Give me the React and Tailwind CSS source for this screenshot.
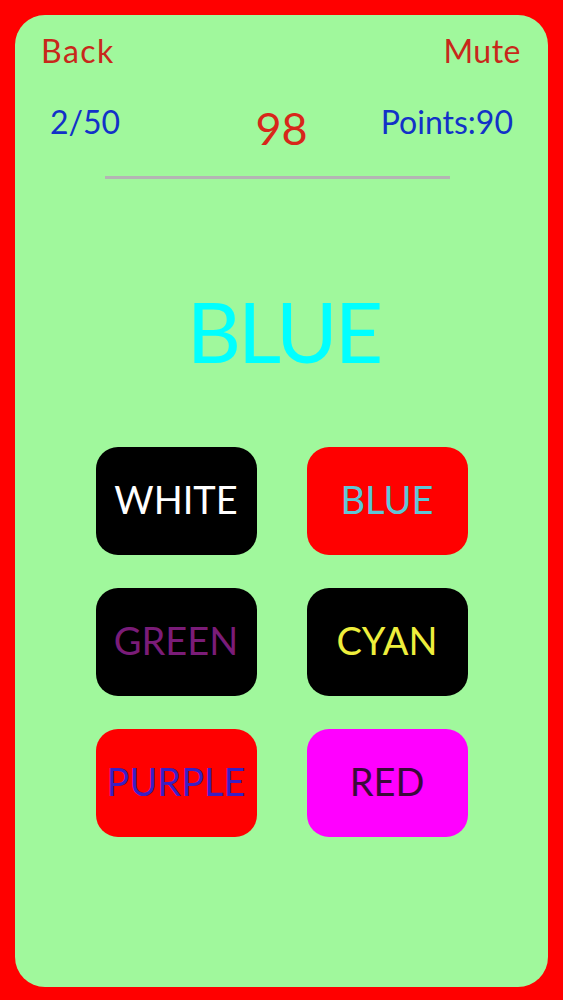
import React from "react";

const buttons = [
  { label: "WHITE", bg: "bg-black", fg: "text-white" },
  { label: "BLUE", bg: "bg-[#ff0000]", fg: "text-[#5ec6d8]" },
  { label: "GREEN", bg: "bg-black", fg: "text-[#7a1c78]" },
  { label: "CYAN", bg: "bg-black", fg: "text-[#eeee3c]" },
  { label: "PURPLE", bg: "bg-[#ff0000]", fg: "text-[#3a1fc4]" },
  { label: "RED", bg: "bg-[#ff00ff]", fg: "text-[#3a0a3a]" },
];

export default function App() {
  return (
    <div className="w-full h-[1000px] bg-[#ff0000] pt-[15px] pb-[13px] px-[15px] font-['Lato',sans-serif]">
      <div className="h-full bg-[#a0f89c] rounded-[30px] flex flex-col">
        <div className="flex justify-between items-start pl-[26px] pr-[27px] pt-[20px] text-[32px] leading-none text-[#c8281a]">
          <span className="tracking-[1.5px]">Back</span>
          <span className="tracking-[0.5px]">Mute</span>
        </div>
        <div className="grid grid-cols-3 items-end pl-[35px] pr-[35px] mt-[26px] text-[32px] leading-none text-[#1232c8]">
          <span>2/50</span>
          <span className="text-center text-[45px] text-[#d8261a] translate-y-[13px]">98</span>
          <span className="text-right">Points:90</span>
        </div>
        <div className="mx-auto mt-[38px] w-[345px] h-[3px] bg-[#b4b4b4] -translate-x-[4px]"></div>
        <div className="text-center text-[84px] leading-none text-[#00ffff] mt-[110px] tracking-[-3px] translate-x-[2px]">BLUE</div>
        <div className="grid grid-cols-[161px_161px] gap-x-[50px] gap-y-[33px] justify-center mt-[74px]">
          {buttons.map((b) => (
            <div
              key={b.label}
              className={`${b.bg} ${b.fg} h-[108px] rounded-[22px] flex items-center justify-center pb-[5px] text-[38px] leading-none`}
            >
              {b.label}
            </div>
          ))}
        </div>
      </div>
    </div>
  );
}
